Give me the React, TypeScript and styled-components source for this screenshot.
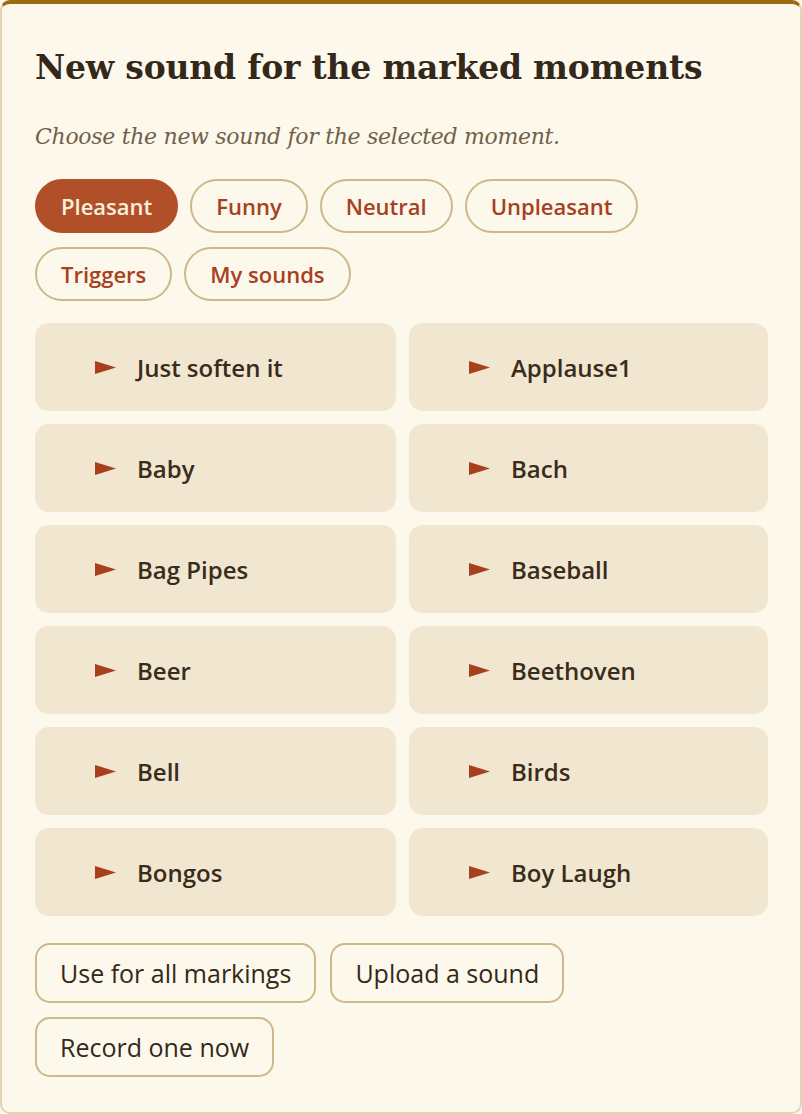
import React, { useState } from 'react';
import styled, { createGlobalStyle } from 'styled-components';

const GlobalStyle = createGlobalStyle`
  html, body {
    margin: 0;
    padding: 0;
    background: #fdf8ec;
  }

  * {
    box-sizing: border-box;
  }
`;

const categories = ['Pleasant', 'Funny', 'Neutral', 'Unpleasant', 'Triggers', 'My sounds'];

const sounds = [
  'Just soften it',
  'Applause1',
  'Baby',
  'Bach',
  'Bag Pipes',
  'Baseball',
  'Beer',
  'Beethoven',
  'Bell',
  'Birds',
  'Bongos',
  'Boy Laugh',
];

const actions = ['Use for all markings', 'Upload a sound', 'Record one now'];

const PlayIcon = () => (
  <svg width="21" height="13" viewBox="0 0 21 13" aria-hidden="true">
    <polygon points="0,0 21,6.5 0,13" fill="#a8401e" />
  </svg>
);

const App = () => {
  const [category, setCategory] = useState('Pleasant');
  const [sound, setSound] = useState<string | null>(null);

  return (
    <>
      <GlobalStyle />
      <Panel>
        <Title>New sound for the marked moments</Title>
        <Subtitle>Choose the new sound for the selected moment.</Subtitle>

        <ChipRow>
          {categories.map((c) => (
            <Chip key={c} $active={c === category} onClick={() => setCategory(c)}>
              {c}
            </Chip>
          ))}
        </ChipRow>

        <SoundGrid>
          {sounds.map((s) => (
            <SoundCard key={s} $selected={s === sound} onClick={() => setSound(s)}>
              <PlayIcon />
              <SoundName>{s}</SoundName>
            </SoundCard>
          ))}
        </SoundGrid>

        <ActionRow>
          {actions.map((a) => (
            <ActionButton key={a}>{a}</ActionButton>
          ))}
        </ActionRow>
      </Panel>
    </>
  );
};

const Panel = styled.section`
  width: 802px;
  height: 1114px;
  background-color: #fdf8ec;
  border: 2px solid #e3d5b3;
  border-top: 4px solid #9c6a12;
  border-radius: 10px;
  padding: 42px 33px 0;
  display: flex;
  flex-direction: column;
`;

const Title = styled.h1`
  margin: 0;
  font-family: 'DejaVu Serif', serif;
  font-size: 33px;
  font-weight: 700;
  line-height: 44px;
  color: #33281a;
  letter-spacing: -0.2px;
`;

const Subtitle = styled.p`
  margin: 32px 0 0;
  font-family: 'DejaVu Serif', serif;
  font-style: italic;
  font-size: 22px;
  line-height: 30px;
  color: #716149;
  letter-spacing: -0.3px;
`;

const ChipRow = styled.div`
  margin-top: 27px;
  display: flex;
  flex-wrap: wrap;
  gap: 14px 12px;
`;

const Chip = styled.button<{ $active: boolean }>`
  height: 54px;
  padding: 0 24px;
  border-radius: 27px;
  border: 2px solid ${({ $active }) => ($active ? '#b14f28' : '#cdb88a')};
  background-color: ${({ $active }) => ($active ? '#b14f28' : 'transparent')};
  color: ${({ $active }) => ($active ? '#fbefdc' : '#a8401e')};
  font-family: 'Open Sans', 'Noto Sans', sans-serif;
  font-size: 22px;
  font-weight: 600;
  cursor: pointer;
`;

const SoundGrid = styled.div`
  margin-top: 22px;
  display: grid;
  grid-template-columns: 361px 359px;
  grid-auto-rows: 88px;
  gap: 13px 13px;
`;

const SoundCard = styled.button<{ $selected: boolean }>`
  display: flex;
  align-items: center;
  gap: 21px;
  padding: 0 0 0 60px;
  border: none;
  border-radius: 14px;
  background-color: ${({ $selected }) => ($selected ? '#ead9b8' : '#f1e6d0')};
  text-align: left;
  cursor: pointer;
`;

const SoundName = styled.span`
  font-family: 'Open Sans', 'Noto Sans', sans-serif;
  font-size: 24px;
  font-weight: 600;
  color: #3a2c1c;
`;

const ActionRow = styled.div`
  margin-top: 27px;
  display: flex;
  flex-wrap: wrap;
  gap: 14px;
`;

const ActionButton = styled.button`
  height: 60px;
  padding: 0 23px;
  border-radius: 15px;
  border: 2px solid #cdb88a;
  background-color: transparent;
  font-family: 'Open Sans', 'Noto Sans', sans-serif;
  font-size: 25px;
  font-weight: 500;
  color: #33281a;
  cursor: pointer;
`;

export default App;
